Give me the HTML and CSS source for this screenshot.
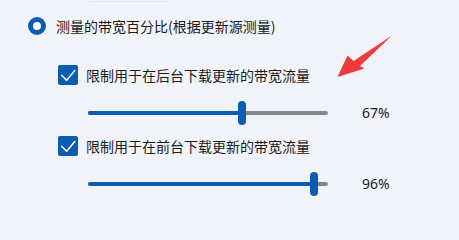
FILE: index.html
```html
<!DOCTYPE html>
<html lang="zh-CN">
<head>
<meta charset="utf-8">
<link rel="stylesheet" href="styles.css">
</head>
<body>
<div class="page">
  <div class="topline"></div>
  <div class="radio-row">
    <span class="radio"></span>
    <span class="label">测量的带宽百分比(根据更新源测量)</span>
  </div>
  <div class="group">
    <div class="check-row first">
      <span class="check"><svg viewBox="0 0 20 20" width="20" height="20"><path d="M3.6 10.2 L8.6 15.2 L16.8 5.6" fill="none" stroke="#fff" stroke-width="1.5" stroke-linecap="round" stroke-linejoin="round"/></svg></span>
      <span class="label">限制用于在后台下载更新的带宽流量</span>
    </div>
    <div class="slider-row">
      <div class="slider">
        <div class="track"><span class="fill" style="width:154px"></span></div>
        <span class="thumb" style="left:150px"></span>
      </div>
      <span class="value">67%</span>
    </div>
    <div class="check-row second">
      <span class="check"><svg viewBox="0 0 20 20" width="20" height="20"><path d="M3.6 10.2 L8.6 15.2 L16.8 5.6" fill="none" stroke="#fff" stroke-width="1.5" stroke-linecap="round" stroke-linejoin="round"/></svg></span>
      <span class="label">限制用于在前台下载更新的带宽流量</span>
    </div>
    <div class="slider-row last">
      <div class="slider">
        <div class="track"><span class="fill" style="width:226px"></span></div>
        <span class="thumb" style="left:222px"></span>
      </div>
      <span class="value">96%</span>
    </div>
  </div>
  <svg class="arrow" viewBox="0 0 459 216" width="459" height="216">
    <polygon points="337.5,77 347.5,55.5 353.5,61 392,35.5 360,66 364.5,68.5" fill="#ef3b3b"/>
  </svg>
</div>
</body>
</html>
```
FILE: styles.css
```css
html, body {
  margin: 0;
  padding: 0;
  background: #f0f3f9;
}
.page {
  position: relative;
  width: 459px;
  height: 216px;
  overflow: hidden;
  background: #f0f3f9;
  font-family: "Noto Sans CJK SC", "Noto Sans", sans-serif;
  font-size: 14px;
  color: #1b1b1b;
}
.topline {
  margin-left: 90px;
  width: 78px;
  height: 1px;
  border-bottom: 1px solid #e2e5ec;
}
.radio-row {
  display: flex;
  align-items: center;
  height: 20px;
  margin-top: 14px;
  padding-left: 28px;
  gap: 10px;
}
.radio {
  width: 8px;
  height: 8px;
  border: 5px solid #0a5db3;
  border-radius: 50%;
  background: #fff;
  flex: none;
}
.label {
  line-height: 20px;
  white-space: nowrap;
}
.group {
  display: flex;
  flex-direction: column;
  padding-left: 58px;
}
.check-row {
  display: flex;
  align-items: center;
  height: 20px;
  gap: 8px;
}
.check-row.first { margin-top: 29px; }
.check-row.second { margin-top: 11px; }
.check {
  width: 20px;
  height: 20px;
  border-radius: 2px;
  background: #0a5db3;
  display: block;
  flex: none;
}
.check svg { display: block; }
.slider-row {
  display: flex;
  align-items: center;
  height: 24px;
  margin-top: 16px;
  padding-left: 30px;
  gap: 34px;
}
.slider {
  position: relative;
  width: 240px;
  height: 24px;
  display: flex;
  align-items: center;
}
.track {
  width: 240px;
  height: 4px;
  background: #878787;
  border-radius: 2px;
  display: flex;
}
.fill {
  display: block;
  height: 4px;
  background: #0a5db3;
  border-radius: 2px 0 0 2px;
}
.thumb {
  position: absolute;
  top: 0;
  width: 8px;
  height: 24px;
  border-radius: 4px;
  background: #0a5db3;
}
.value {
  font-family: "Noto Sans", sans-serif;
  font-size: 14px;
  line-height: 20px;
  color: #1b1b1b;
}
.arrow {
  position: absolute;
  left: 0;
  top: 0;
}
```
